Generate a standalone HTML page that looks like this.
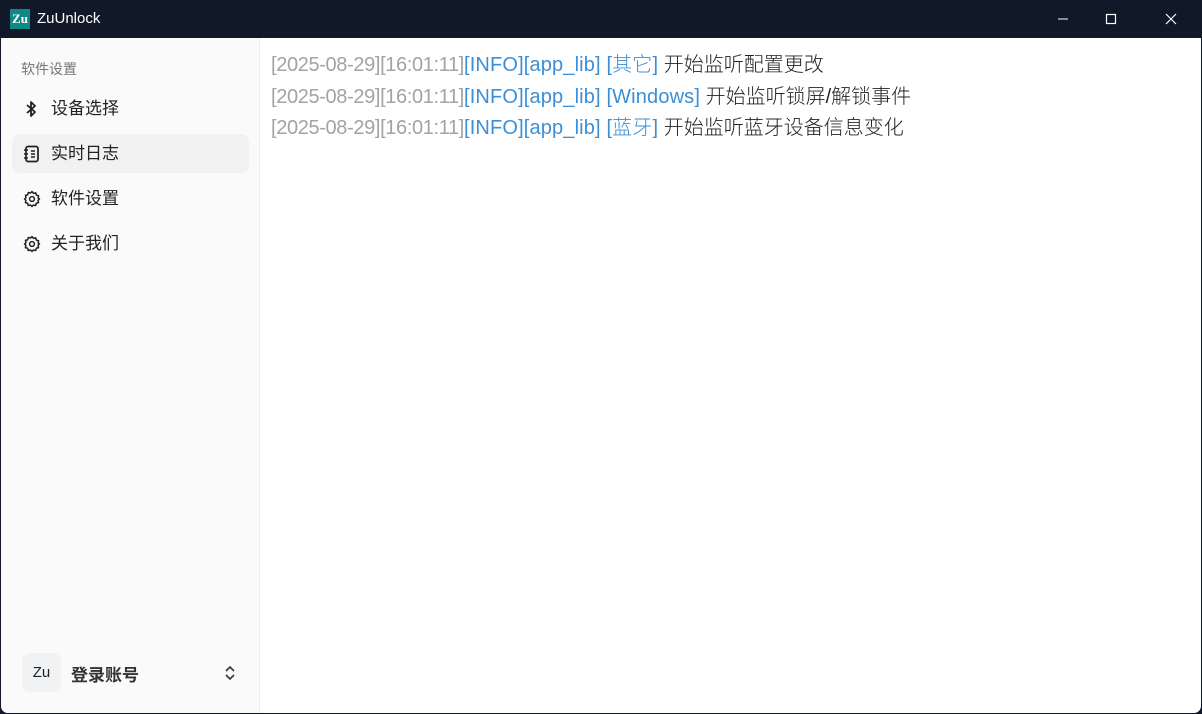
<!DOCTYPE html>
<html><head><meta charset="utf-8"><style>
*{margin:0;padding:0;box-sizing:border-box}
body{width:1202px;height:714px;overflow:hidden;background:#111827;font-family:"Liberation Sans","Noto Sans CJK SC",sans-serif;position:relative}
.title{position:absolute;left:0;top:0;width:1202px;height:38px;background:#111827;color:#fff}
.logo{position:absolute;left:10px;top:9px;width:20px;height:20px;background:#0d8a86;color:#fff;font-weight:bold;font-size:13px;line-height:20px;text-align:center;font-family:"Liberation Serif",serif}
.tt{position:absolute;left:37px;top:10px;font-size:15px}
.ctl{position:absolute;top:0;height:38px;width:46px;display:flex;align-items:center;justify-content:center}
.win{position:absolute;left:1px;top:38px;width:1200px;height:675px;background:#fff;border-radius:0 0 7px 7px;overflow:hidden}
.side{position:absolute;left:0;top:0;width:259px;height:675px;background:#fafafa;border-right:1px solid #ececec}
.sec{position:absolute;left:20px;top:21px;font-size:14px;color:#777}
.item{position:absolute;left:11px;width:237px;height:39px;border-radius:8px;font-size:17px;color:#222;line-height:39px;padding-left:39px}
.item svg{position:absolute;left:11px;top:11px}
.act{background:#f1f1f1}
.log{position:absolute;left:270px;top:12px;font-size:20px;line-height:31.5px;white-space:nowrap;font-weight:300}
.g{color:#a3a3a3;letter-spacing:-0.36px}.b{color:#3b8fd6;letter-spacing:0.15px}.k{color:#222}
</style></head><body>
<div class="title"><div class="logo">Zu</div><div class="tt">ZuUnlock</div>
<div class="ctl" style="left:1040px"><svg width="12" height="12"><path d="M1 6h10" stroke="#fff" stroke-width="1"/></svg></div>
<div class="ctl" style="left:1088px"><svg width="12" height="12"><rect x="1.5" y="1.5" width="9" height="9" fill="none" stroke="#fff" stroke-width="1.2"/></svg></div>
<div class="ctl" style="left:1148px"><svg width="12" height="12"><path d="M1 1l10 10M11 1L1 11" stroke="#fff" stroke-width="1.2"/></svg></div>
</div>
<div class="win">
<div class="side">
<div class="sec">软件设置</div>
<div class="item" style="top:51px"><svg width="16" height="18" viewBox="0 0 16 18"><path d="M4 5l8 7-4 4V2l4 4-8 7" fill="none" stroke="#222" stroke-width="1.8" stroke-linejoin="round"/></svg>设备选择</div>
<div class="item act" style="top:96px"><svg width="18" height="18" viewBox="0 0 18 18"><rect x="3" y="1.5" width="12" height="15" rx="2" fill="none" stroke="#222" stroke-width="1.7"/><path d="M1 5h4M1 9h4M1 13h4M8 6h4M8 9h4M8 12h4" stroke="#222" stroke-width="1.6"/></svg>实时日志</div>
<div class="item" style="top:141px"><svg width="18" height="18" viewBox="0 0 24 24"><path d="M12 2l2 2.5 3-.7.8 3 3 .9-.7 3L22 12l-2 1.8.7 3-3 .9-.8 3-3-.7L12 22l-2-2-3 .7-.8-3-3-.9.7-3L2 12l2-1.8-.7-3 3-.9.8-3 3 .7z" fill="none" stroke="#222" stroke-width="2" stroke-linejoin="round"/><circle cx="12" cy="12" r="3.2" fill="none" stroke="#222" stroke-width="2"/></svg>软件设置</div>
<div class="item" style="top:186px"><svg width="18" height="18" viewBox="0 0 24 24"><path d="M12 2l2 2.5 3-.7.8 3 3 .9-.7 3L22 12l-2 1.8.7 3-3 .9-.8 3-3-.7L12 22l-2-2-3 .7-.8-3-3-.9.7-3L2 12l2-1.8-.7-3 3-.9.8-3 3 .7z" fill="none" stroke="#222" stroke-width="2" stroke-linejoin="round"/><circle cx="12" cy="12" r="3.2" fill="none" stroke="#222" stroke-width="2"/></svg>关于我们</div>
<div style="position:absolute;left:21px;top:615px;width:39px;height:39px;border-radius:8px;background:#f0f2f4;font-size:15px;line-height:39px;text-align:center;color:#222">Zu</div>
<div style="position:absolute;left:70px;top:623px;font-size:17px;font-weight:bold;color:#333">登录账号</div>
<svg style="position:absolute;left:222px;top:626px" width="14" height="18" viewBox="0 0 14 18"><path d="M3 7l4-4 4 4M3 11l4 4 4-4" fill="none" stroke="#333" stroke-width="1.6"/></svg>
</div>
<div class="log">
<div><span class="g">[2025-08-29][16:01:11]</span><span class="b">[INFO][app_lib] [其它]</span> <span class="k">开始监听配置更改</span></div>
<div><span class="g">[2025-08-29][16:01:11]</span><span class="b">[INFO][app_lib] [Windows]</span> <span class="k">开始监听锁屏/解锁事件</span></div>
<div><span class="g">[2025-08-29][16:01:11]</span><span class="b">[INFO][app_lib] [蓝牙]</span> <span class="k">开始监听蓝牙设备信息变化</span></div>
</div>
</div>
</body></html>
